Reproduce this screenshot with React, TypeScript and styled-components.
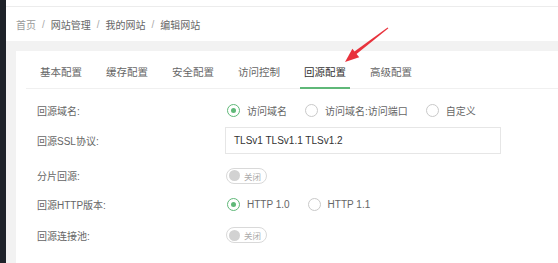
import * as React from 'react';
import styled, { createGlobalStyle } from 'styled-components';

const GlobalStyle = createGlobalStyle`
  html, body {
    margin: 0;
    padding: 0;
    background: #f2f2f2;
    font-family: "Liberation Sans", "Noto Sans CJK SC", sans-serif;
  }
`;

const Page = styled.div`
  position: relative;
  display: flex;
  width: 558px;
  height: 263px;
  overflow: hidden;
`;

const Sidebar = styled.div`
  width: 6px;
  flex: none;
  background: #1e2229;
`;

const Main = styled.div`
  flex: 1;
  display: flex;
  flex-direction: column;
  min-width: 0;
`;

const TopStrip = styled.div`
  height: 6px;
  background: #fff;
  border-bottom: 1px solid #ececec;
`;

const Breadcrumb = styled.div`
  height: 34px;
  background: #fff;
  display: flex;
  align-items: center;
  padding-left: 10px;
  font-size: 10px;
  color: #666;
`;

const Crumb = styled.span<{ $muted?: boolean }>`
  color: ${p => (p.$muted ? '#999' : '#666')};
`;

const Sep = styled.span`
  color: #aaa;
  margin: 0 6px;
`;

const Content = styled.div`
  flex: 1;
  padding: 10px 0 0 10px;
`;

const Panel = styled.div`
  background: #fff;
  height: 100%;
  padding-top: 6px;
`;

const TabBar = styled.div`
  display: flex;
  margin-left: 10px;
  padding-left: 2px;
  border-bottom: 1px solid #f0f0f0;
`;

const Tab = styled.div<{ $active?: boolean }>`
  height: 30px;
  line-height: 31px;
  margin: 0 8px -1px;
  padding: 0 4px;
  font-size: 10.5px;
  color: ${p => (p.$active ? '#333' : '#666')};
  border-bottom: 2px solid ${p => (p.$active ? '#5fb878' : 'transparent')};
`;

const Form = styled.div`
  padding: 9px 0 0 21px;
`;

const Row = styled.div<{ $h: number }>`
  display: flex;
  align-items: center;
  height: ${p => p.$h}px;
`;

const Label = styled.div`
  width: 189px;
  flex: none;
  font-size: 10px;
  color: #666;
`;

const Options = styled.div`
  display: flex;
  align-items: center;
  gap: 17px;
`;

const RadioItem = styled.label`
  display: flex;
  align-items: center;
  gap: 7px;
  font-size: 10px;
  color: #666;
`;

const RadioCircle = styled.span<{ $checked?: boolean }>`
  width: 11px;
  height: 11px;
  border-radius: 50%;
  border: 1px solid ${p => (p.$checked ? '#5fb878' : '#c9c9c9')};
  display: flex;
  align-items: center;
  justify-content: center;
  margin-left: 1px;
  &::after {
    content: '';
    width: 5px;
    height: 5px;
    border-radius: 50%;
    background: ${p => (p.$checked ? '#5fb878' : 'transparent')};
  }
`;

const TextInput = styled.div`
  width: 266px;
  height: 25px;
  border: 1px solid #e6e6e6;
  margin-left: -1px;
  padding-left: 8px;
  display: flex;
  align-items: center;
  font-size: 10px;
  color: #333;
`;

const Switch = styled.div`
  width: 37px;
  height: 14px;
  border: 1px solid #d9d9d9;
  border-radius: 10px;
  display: flex;
  align-items: center;
  gap: 4px;
  padding-left: 2px;
  box-sizing: content-box;
  &::before {
    content: '';
    width: 11px;
    height: 11px;
    border-radius: 50%;
    background: #d2d2d2;
  }
`;

const SwitchText = styled.span`
  font-size: 8.5px;
  color: #aaa;
`;

const ArrowLayer = styled.svg`
  position: absolute;
  left: 0;
  top: 0;
  pointer-events: none;
`;

const Radio = ({ label, checked }: { label: string; checked?: boolean }) => (
  <RadioItem>
    <RadioCircle $checked={checked} />
    {label}
  </RadioItem>
);

const OffSwitch = () => (
  <Switch>
    <SwitchText>关闭</SwitchText>
  </Switch>
);

const tabs = ['基本配置', '缓存配置', '安全配置', '访问控制', '回源配置', '高级配置'];

const App: React.FC = () => (
  <>
    <GlobalStyle />
    <Page>
      <Sidebar />
      <Main>
        <TopStrip />
        <Breadcrumb>
          <Crumb $muted>首页</Crumb>
          <Sep>/</Sep>
          <Crumb>网站管理</Crumb>
          <Sep>/</Sep>
          <Crumb>我的网站</Crumb>
          <Sep>/</Sep>
          <Crumb>编辑网站</Crumb>
        </Breadcrumb>
        <Content>
          <Panel>
            <TabBar>
              {tabs.map(t => (
                <Tab key={t} $active={t === '回源配置'}>
                  {t}
                </Tab>
              ))}
            </TabBar>
            <Form>
              <Row $h={24}>
                <Label>回源域名:</Label>
                <Options>
                  <Radio label="访问域名" checked />
                  <Radio label="访问域名:访问端口" />
                  <Radio label="自定义" />
                </Options>
              </Row>
              <Row $h={37}>
                <Label>回源SSL协议:</Label>
                <TextInput>TLSv1 TLSv1.1 TLSv1.2</TextInput>
              </Row>
              <Row $h={33}>
                <Label>分片回源:</Label>
                <OffSwitch />
              </Row>
              <Row $h={25}>
                <Label>回源HTTP版本:</Label>
                <Options>
                  <Radio label="HTTP 1.0" checked />
                  <Radio label="HTTP 1.1" />
                </Options>
              </Row>
              <Row $h={36}>
                <Label>回源连接池:</Label>
                <OffSwitch />
              </Row>
            </Form>
          </Panel>
        </Content>
      </Main>
      <ArrowLayer width="558" height="263" viewBox="0 0 558 263">
        <polygon points="387.6,27.4 388.4,28.2 355.6,54.8 353.4,52.2" fill="#e8323c" />
        <polygon points="345,62 352.4,48.8 359.2,57.2" fill="#e8323c" />
      </ArrowLayer>
    </Page>
  </>
);

export default App;
